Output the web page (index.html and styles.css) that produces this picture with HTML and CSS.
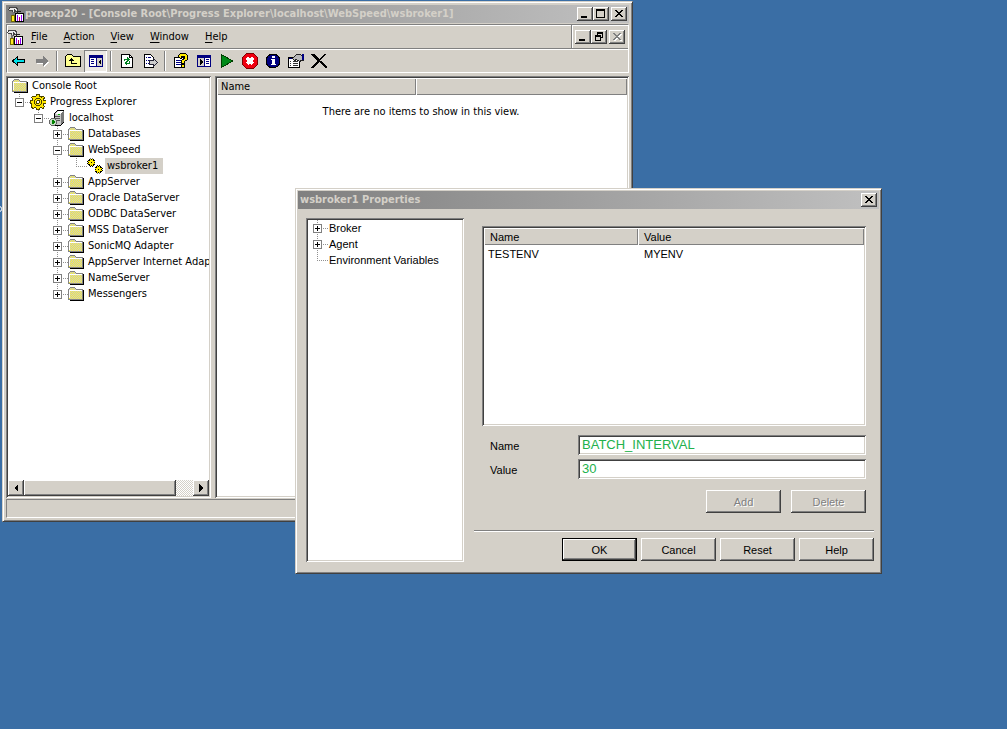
FILE: index.html
```html
<!DOCTYPE html>
<html lang="en">
<head>
<meta charset="utf-8">
<title>proexp20</title>
<link rel="stylesheet" href="styles.css">
</head>
<body>
<svg class="defs" aria-hidden="true">
  <defs>
    <pattern id="dither" width="2" height="2" patternUnits="userSpaceOnUse">
      <rect width="2" height="2" fill="#f8f03c"/><rect width="1" height="1" fill="#c8c8c8"/><rect x="1" y="1" width="1" height="1" fill="#c8c8c8"/>
    </pattern>
    <symbol id="folder" viewBox="0 0 16 16">
      <path d="M2 14h13V4h1v11H2z" fill="#000"/>
      <path d="M.5 13.500v-10l2-2h4l2 2h6v10z" fill="url(#dither)" stroke="#848484"/>
      <path d="M1.500 12V4.500H14" fill="none" stroke="#fff"/>
    </symbol>
    <symbol id="gear" viewBox="0 0 16 16">
      <path d="M6.500.5h3l.5 2 1.500.5 1.500-1 1.500 1.500-1 2 .5 1 2 .5v2l-2 .5-.5 1.500 1 1.500-1.500 2-2-1-1 .5-.5 1.500h-3l-.5-1.500-1.500-.5-1.500 1-2-1.500 1-2-.5-1.500-1.500-.5v-2l2-.5.5-1.500-1-1.500 1.500-1.500 2 1 1-.5z" fill="#ffe600" stroke="#4a4200"/>
      <circle cx="8" cy="8" r="3.500" fill="none" stroke="#4a4200"/>
      <circle cx="8" cy="8" r="1.500" fill="#fff" stroke="#4a4200"/>
    </symbol>
    <symbol id="cog" viewBox="0 0 9 9">
      <path d="M3 0h1v1h1V0h1v1h1v1h1v1h1v1H8v1h1v1H8v1H7v1H6v1H5V8H4v1H3V8H2V7H1V6H0V5h1V4H0V3h1V2h1V1h1z" fill="#000"/>
      <path d="M3 2h3v1h1v3H6v1H3V6H2V3h1z" fill="#ffec00"/><path d="M3 1h1v1H3zM5 1h1v1H5zM1 3h1v1H1zM7 3h1v1H7zM1 5h1v1H1zM7 5h1v1H7zM3 7h1v1H3zM5 7h1v1H5z" fill="#ffec00"/>
      <path d="M4 4h1v1H4z" fill="#000"/>
    </symbol>
    <symbol id="gears" viewBox="0 0 17 16">
      <use href="#cog" x="0" y="0" width="9" height="9"/>
      <use href="#cog" x="8" y="7" width="9" height="9"/>
    </symbol>
    <symbol id="server" viewBox="0 0 16 16">
      <path d="M5.500 3.500l3-3h6v12l-3 3h-6z" fill="#c6c6c6" stroke="#000"/>
      <path d="M6 4h5l3-3H9z" fill="#fff"/><path d="M11.500 4v11l3-3V1z" fill="#777"/>
      <path d="M6 6h5M6 8h5M6 10h5" stroke="#555"/><rect x="9" y="4" width="2" height="1" fill="#0b0"/>
      <circle cx="4" cy="12" r="3.500" fill="#c6ddc6" stroke="#666"/><path d="M3 9.500l4 2.500-4 2.500z" fill="#008000"/>
    </symbol>
    <symbol id="tools" viewBox="0 0 16 16">
      <path d="M.5 3.500l2-2.500h5l2 2v2h-2l-1-1v2h-2V4H1z" fill="#e8e8e8" stroke="#444"/>
      <path d="M4 6h2v4H4z" fill="#777"/><path d="M3.500 9.500h3v6h-3z" fill="#ffec20" stroke="#746800"/>
      <path d="M7.500 7.500h8v8h-8z" fill="#fff" stroke="#000"/><path d="M9.500 9v6M13.500 9v6" stroke="#90f"/><path d="M11.500 11v4" stroke="#c00050"/><path d="M9 7.500V5.500h4" fill="none" stroke="#222"/>
    </symbol>
    <symbol id="min" viewBox="0 0 12 10"><path d="M2 7h6v2H2z"/></symbol>
    <symbol id="max" viewBox="0 0 12 10"><path fill-rule="evenodd" d="M1 0h9v9H1zM2 2v6h7V2z"/></symbol>
    <symbol id="restore" viewBox="0 0 12 10"><path fill-rule="evenodd" d="M4 0h6v6H8v3H2V3h2zM5 2v1h3v2h1V2zM3 5v3h4V5z"/></symbol>
    <symbol id="close" viewBox="0 0 12 10"><path d="M2 1h2v1h1v1h2V2h1V1h2v1H9v1H8v1H7v1h1v1h1v1h1v1H8V7H7V6H5v1H4v1H2V7h1V6h1V5h1V4H4V3H3V2H2z"/></symbol>
  </defs>
</svg>

<main class="desktop">
  <span class="desk-mark"></span>
  <section class="window console" aria-label="proexp20">
    <header class="titlebar">
      <svg class="icon"><use href="#tools"/></svg>
      <h1 class="title">proexp20 - [Console Root\Progress Explorer\localhost\WebSpeed\wsbroker1]</h1>
      <div class="controls">
        <button class="ctl" aria-label="Minimize"><svg><use href="#min"/></svg></button>
        <button class="ctl" aria-label="Maximize"><svg><use href="#max"/></svg></button>
        <button class="ctl ctl-close" aria-label="Close"><svg><use href="#close"/></svg></button>
      </div>
    </header>
    <div class="bars">
      <nav class="menubar">
        <svg class="icon"><use href="#tools"/></svg>
        <button class="menu"><u>F</u>ile</button>
        <button class="menu"><u>A</u>ction</button>
        <button class="menu"><u>V</u>iew</button>
        <button class="menu"><u>W</u>indow</button>
        <button class="menu"><u>H</u>elp</button>
        <div class="controls mdi">
          <button class="ctl" aria-label="Minimize view"><svg><use href="#min"/></svg></button>
          <button class="ctl" aria-label="Restore view"><svg><use href="#restore"/></svg></button>
          <button class="ctl ctl-close" aria-label="Close view" disabled><svg><use href="#close"/></svg></button>
        </div>
      </nav>
      <div class="toolbar">
        <button class="tool" aria-label="Back"><svg viewBox="0 0 16 16"><path d="M1.500 8l5-4.500v3h7v3h-7v3z" fill="#00e0e8" stroke="#000"/></svg></button>
        <button class="tool" aria-label="Forward"><svg viewBox="0 0 16 16"><path d="M3 8h7V5l5 4-5 5v-3H3z" fill="#fff"/><path d="M2 6h7V3l5 5-5 5v-3H2z" fill="#808080"/></svg></button>
        <i class="sep"></i>
        <button class="tool" aria-label="Up one level"><svg viewBox="0 0 16 16"><path d="M.5 13.500v-10l2-2h4l2 2h7v10z" fill="#ffff90" stroke="#000"/><path d="M6.500 5v5.500H12M4 7.500h5M5 6.500h3" stroke="#000" fill="none"/></svg></button>
        <button class="tool pressed" aria-label="Show console tree"><svg viewBox="0 0 16 16"><path d="M1 2h14v12H1z" fill="#000080"/><path d="M2 5h6v8H2z" fill="#fff"/><path d="M9 5h5v8H9z" fill="#d4d0c8"/><path d="M3 6.500h3M3 8.500h3M3 10.500h3" stroke="#000080"/><path d="M13 6v6L10 9z" fill="#000"/></svg></button>
        <i class="sep"></i>
        <button class="tool" aria-label="Refresh"><svg viewBox="0 0 16 16"><path d="M2.500 1.500h8l3 3v10h-11z" fill="#fff" stroke="#000"/><path d="M10.500 1.500v3h3" fill="none" stroke="#000"/><path d="M5 8V6h3V4l3 3-3 2V7H6v1zM11 8v3H8v2l-3-3 3-2v2h2V8z" fill="#008020"/></svg></button>
        <button class="tool" aria-label="Export list"><svg viewBox="0 0 16 16"><path d="M2.500 1.500h6l3 3v10h-9z" fill="#fff" stroke="#000"/><path d="M4 4.500h1M6 4.500h3M4 7.500h1M6 7.500h3M4 10.500h1M6 10.500h3" stroke="#000080"/><path d="M7.500 7.500h4v-2l4 4-4 4v-2h-4z" fill="#ccc" stroke="#223"/></svg></button>
        <i class="sep"></i>
        <button class="tool" aria-label="Help"><svg viewBox="0 0 16 16"><path d="M1.500 4.500h9v10h-9z" fill="#fff" stroke="#000"/><path d="M3 7.500h5M3 9.500h5M3 11.500h6" stroke="#000080"/><path d="M5.500 4.500v-2l2-2h5l2 2v4l-3 2v2h-3v-3l3-2v-2h-3v2z" fill="#ffec00" stroke="#000"/><path d="M8.500 11.500h3v3h-3z" fill="#ffec00" stroke="#000"/></svg></button>
        <button class="tool" aria-label="Show action pane"><svg viewBox="0 0 16 16"><path d="M1 2h14v12H1z" fill="#000080"/><path d="M2 5h6v8H2z" fill="#d4d0c8"/><path d="M9 5h5v8H9z" fill="#fff"/><path d="M10 6.500h3M10 8.500h3M10 10.500h3" stroke="#000080"/><path d="M4 6v6l3-3z" fill="#000"/></svg></button>
        <button class="tool" aria-label="Start"><svg viewBox="0 0 16 16"><path d="M2.500 1.500l11 6.500-11 6.500z" fill="#008a18" stroke="#004000"/></svg></button>
        <button class="tool" aria-label="Stop"><svg viewBox="0 0 16 16"><path d="M4.500.5h7l4 4v7l-4 4h-7l-4-4v-7z" fill="#f00010" stroke="#800000"/><path d="M5 5l6 6M11 5l-6 6" stroke="#fff" stroke-width="3"/></svg></button>
        <button class="tool" aria-label="Status"><svg viewBox="0 0 16 16"><circle cx="8" cy="8" r="7" fill="#000080" stroke="#000"/><path d="M7 3h3v2H7zM6 6h4v5h1v1H6v-1h1V7H6z" fill="#fff"/></svg></button>
        <button class="tool" aria-label="Properties"><svg viewBox="0 0 16 16"><path d="M.5 4.500h11v10H.5z" fill="#fff" stroke="#000"/><path d="M1 5.500h10" stroke="#000080"/><path d="M2 8.500h1M5 8.500h5M2 10.500h1M5 10.500h5M2 12.500h1M5 12.500h5" stroke="#333"/><path d="M4.500 5.500l4-4h4l1 1h2v5h-2l-2 1-3-2-2 1z" fill="#bbb" stroke="#222"/><path d="M14 1h2v6h-2z" fill="#000080"/></svg></button>
        <button class="tool" aria-label="Delete"><svg viewBox="0 0 16 16"><path d="M0 1h3l5 5 6-5h1L9.500 7.500 16 14v1h-2L8 9l-6 6H0l6-7z" fill="#000"/></svg></button>
      </div>
    </div>
    <div class="panes">
      <div class="pane tree-pane">
        <ul class="tree root">
          <li><div class="node root-node"><svg class="icon"><use href="#folder"/></svg><span class="label">Console Root</span></div>
            <ul class="tree">
              <li><div class="node"><button class="toggle" aria-label="Collapse"></button><svg class="icon"><use href="#gear"/></svg><span class="label">Progress Explorer</span></div>
                <ul class="tree sub">
                  <li><div class="node"><button class="toggle" aria-label="Collapse"></button><svg class="icon"><use href="#server"/></svg><span class="label">localhost</span></div>
                    <ul class="tree sub">
                      <li><div class="node"><button class="toggle plus" aria-label="Expand"></button><svg class="icon"><use href="#folder"/></svg><span class="label">Databases</span></div></li>
                      <li><div class="node"><button class="toggle" aria-label="Collapse"></button><svg class="icon"><use href="#folder"/></svg><span class="label">WebSpeed</span></div>
                        <ul class="tree sub"><li><div class="node leaf"><svg class="icon"><use href="#gears"/></svg><span class="label selected">wsbroker1</span></div></li></ul>
                      </li>
                      <li><div class="node"><button class="toggle plus" aria-label="Expand"></button><svg class="icon"><use href="#folder"/></svg><span class="label">AppServer</span></div></li>
                      <li><div class="node"><button class="toggle plus" aria-label="Expand"></button><svg class="icon"><use href="#folder"/></svg><span class="label">Oracle DataServer</span></div></li>
                      <li><div class="node"><button class="toggle plus" aria-label="Expand"></button><svg class="icon"><use href="#folder"/></svg><span class="label">ODBC DataServer</span></div></li>
                      <li><div class="node"><button class="toggle plus" aria-label="Expand"></button><svg class="icon"><use href="#folder"/></svg><span class="label">MSS DataServer</span></div></li>
                      <li><div class="node"><button class="toggle plus" aria-label="Expand"></button><svg class="icon"><use href="#folder"/></svg><span class="label">SonicMQ Adapter</span></div></li>
                      <li><div class="node"><button class="toggle plus" aria-label="Expand"></button><svg class="icon"><use href="#folder"/></svg><span class="label">AppServer Internet Adap</span></div></li>
                      <li><div class="node"><button class="toggle plus" aria-label="Expand"></button><svg class="icon"><use href="#folder"/></svg><span class="label">NameServer</span></div></li>
                      <li><div class="node"><button class="toggle plus" aria-label="Expand"></button><svg class="icon"><use href="#folder"/></svg><span class="label">Messengers</span></div></li>
                    </ul>
                  </li>
                </ul>
              </li>
            </ul>
          </li>
        </ul>
        <div class="scrollbar">
          <button class="arrow" aria-label="Scroll left"><svg viewBox="0 0 8 8"><path d="M6 0v8L2 4z"/></svg></button>
          <div class="thumb"></div><div class="track"></div>
          <button class="arrow" aria-label="Scroll right"><svg viewBox="0 0 8 8"><path d="M2 0v8l4-4z"/></svg></button>
        </div>
      </div>
      <div class="pane list-pane">
        <table class="list items">
          <colgroup><col class="col-item"><col></colgroup>
          <thead><tr><th>Name</th><th></th></tr></thead>
          <tbody><tr><td class="empty" colspan="2">There are no items to show in this view.</td></tr></tbody>
        </table>
      </div>
    </div>
    <div class="status"></div>
  </section>

  <section class="window dialog" role="dialog" aria-label="wsbroker1 Properties">
    <header class="titlebar">
      <h2 class="title">wsbroker1 Properties</h2>
      <div class="controls"><button class="ctl ctl-close" aria-label="Close"><svg><use href="#close"/></svg></button></div>
    </header>
    <div class="dialog-body">
      <div class="pane categories">
        <ul class="tree">
          <li><div class="node"><button class="toggle plus" aria-label="Expand"></button><span class="label">Broker</span></div></li>
          <li><div class="node"><button class="toggle plus" aria-label="Expand"></button><span class="label">Agent</span></div></li>
          <li><div class="node leaf"><span class="label">Environment Variables</span></div></li>
        </ul>
      </div>
      <form class="editor">
        <div class="settings">
          <div class="pane variables">
            <table class="list">
              <colgroup><col class="col-name"><col></colgroup>
              <thead><tr><th>Name</th><th>Value</th></tr></thead>
              <tbody><tr><td>TESTENV</td><td>MYENV</td></tr></tbody>
            </table>
          </div>
          <div class="field"><label for="var-name">Name</label><input id="var-name" type="text" value="BATCH_INTERVAL"></div>
          <div class="field"><label for="var-value">Value</label><input id="var-value" type="text" value="30"></div>
          <div class="actions edit-actions">
            <button class="btn" type="button" disabled>Add</button>
            <button class="btn" type="button" disabled>Delete</button>
          </div>
        </div>
        <div class="actions dialog-actions">
          <button class="btn default" type="button">OK</button>
          <button class="btn" type="button">Cancel</button>
          <button class="btn" type="button">Reset</button>
          <button class="btn" type="button">Help</button>
        </div>
      </form>
    </div>
  </section>
</main>
</body>
</html>
```
FILE: styles.css
```css
:root {
  --face: #d4d0c8;
  --shade: #808080;
  --dark: #404040;
  --raised: inset -1px -1px var(--dark), inset 1px 1px #fff, inset -2px -2px var(--shade);
}
* { box-sizing: border-box; }
body {
  margin: 0;
  background: #3a6ea5;
  color: #000;
  font: 11px/16px "DejaVu Sans Condensed", "DejaVu Sans", sans-serif;
}
button, input { font: inherit; color: inherit; margin: 0; padding: 0; border: 0; border-radius: 0; }
button { background: none; }
svg { display: block; shape-rendering: crispEdges; }
.defs { position: absolute; width: 0; height: 0; }
.desktop { position: relative; min-height: 100vh; overflow: hidden; }
.desk-mark {
  position: absolute; left: -3px; top: 206px; width: 5px; height: 6px;
  border: 1px solid #fff; border-radius: 3px;
}

.window {
  position: absolute;
  background: var(--face);
  border: 1px solid;
  border-color: var(--face) var(--dark) var(--dark) var(--face);
  box-shadow: inset 1px 1px #fff, inset -1px -1px var(--shade);
}
.console { left: 2px; right: 374px; top: 1px; padding: 3px; }
.dialog {
  left: 295px; right: 125px; top: 188px; padding: 2px;
  font-family: "Liberation Sans", Arial, sans-serif;
}
.titlebar {
  display: flex; align-items: center; gap: 1px; height: 18px; padding: 0 2px;
  background: linear-gradient(to right, #808080, #c0c0c0);
}
.title {
  flex: 1; margin: 0; overflow: hidden; white-space: nowrap;
  color: var(--face); font: bold 11px/16px "DejaVu Sans Condensed", "DejaVu Sans", sans-serif;
}
.icon { flex: none; width: 16px; height: 16px; }
.controls { display: flex; flex: none; }
.ctl {
  display: flex; align-items: center; justify-content: center;
  width: 16px; height: 14px; background: var(--face); box-shadow: var(--raised);
}
.ctl svg { width: 12px; height: 10px; }
.ctl-close { margin-left: 2px; }
.ctl:disabled { color: var(--shade); }
.ctl:disabled svg { fill: var(--shade); filter: drop-shadow(1px 1px #fff); }

.bars { margin-top: 1px; border: 1px solid; border-color: var(--shade) #fff #fff var(--shade); }
.menubar {
  display: flex; align-items: center; height: 24px;
  border-bottom: 1px solid var(--shade); box-shadow: inset 1px 1px #fff;
}
.menu { padding: 1px 8px 0; height: 18px; }
.menu u { text-underline-offset: 2px; }
.mdi {
  align-self: stretch; align-items: center; margin-left: auto; padding: 0 3px;
  border-left: 1px solid var(--shade); box-shadow: inset 1px 0 #fff;
}
.toolbar { display: flex; align-items: center; height: 23px; box-shadow: inset 1px 1px #fff; }
.tool { display: flex; align-items: center; justify-content: center; width: 23px; height: 22px; }
.tool svg { width: 16px; height: 16px; }
.pressed { background: #ece9e4; box-shadow: inset 1px 1px var(--shade), inset -1px -1px #fff; }
.sep { width: 2px; height: 20px; margin: 0 3px; border-left: 1px solid var(--shade); border-right: 1px solid #fff; }

.panes { display: flex; gap: 4px; margin-top: 3px; min-height: 422px; }
.pane {
  background: #fff; overflow: hidden; padding: 2px;
  box-shadow: inset 1px 1px var(--shade), inset -1px -1px #fff, inset 2px 2px var(--dark), inset -2px -2px var(--face);
}
.tree-pane { display: flex; flex: none; flex-direction: column; width: 205px; }
.list-pane { flex: 1; }

.tree { list-style: none; margin: 0; padding: 0; white-space: nowrap; }
.tree.root { padding-left: 2px; }
.tree-pane > .tree { flex: 1; overflow: hidden; }
.tree.sub { margin-left: 19px; }
.tree li { background: repeating-linear-gradient(#909090 0 1px, transparent 1px 2px) 9px 0 / 1px 100% no-repeat; }
.tree li:last-child { background-size: 1px 9px; }
.tree-pane > .tree > li { background: none; }
.node {
  display: flex; align-items: center; height: 16px; padding-left: 5px;
  background: repeating-linear-gradient(to right, #909090 0 1px, transparent 1px 2px) 9px 8px / 11px 1px no-repeat;
}
.node.leaf { padding-left: 19px; }
.node.root-node { padding-left: 1px; background: none; }
.toggle {
  flex: none; width: 9px; height: 9px; margin-right: 5px; border: 1px solid var(--shade);
  background: linear-gradient(#000, #000) 1px 3px / 5px 1px no-repeat, #fff;
}
.toggle.plus {
  background: linear-gradient(#000, #000) 1px 3px / 5px 1px no-repeat, linear-gradient(#000, #000) 3px 1px / 1px 5px no-repeat, #fff;
}
.label { padding: 0 2px; }
.node > .icon { margin: 0 2px 0 1px; }
.selected { padding-right: 5px; background: var(--face); }

.scrollbar { display: flex; height: 16px; flex: none; }
.arrow {
  display: flex; flex: none; align-items: center; justify-content: center;
  width: 16px; background: var(--face); box-shadow: var(--raised);
}
.arrow svg { width: 8px; height: 8px; }
.thumb { flex: 1; background: var(--face); box-shadow: var(--raised); }
.track { width: 17px; background: repeating-conic-gradient(#fff 0 25%, var(--face) 0 50%) 0 0 / 2px 2px; }

.list { width: 100%; border-collapse: separate; border-spacing: 0; table-layout: fixed; }
.list th {
  height: 17px; padding: 0 6px; background: var(--face); text-align: left; font-weight: normal;
  line-height: 16px; box-shadow: inset 1px 1px #fff, inset -1px -1px var(--shade);
}
.list td { padding: 1px 6px; }
.list td:first-child { padding-left: 4px; }
.items th { padding: 0 4px; }
.col-item { width: 199px; }
.col-name { width: 154px; }
.list .empty { padding-top: 9px; text-align: center; }
.status { height: 19px; margin-top: 1px; border: 1px solid; border-color: var(--shade) #fff #fff var(--shade); }

.dialog-body { display: flex; gap: 10px; padding: 9px 5px 9px 8px; }
.categories { flex: none; width: 158px; }
.editor { flex: 1; display: flex; flex-direction: column; }
.settings { padding: 8px 8px 17px; border-bottom: 1px solid var(--shade); box-shadow: 0 1px #fff; }
.variables { height: 200px; margin-bottom: 9px; }
.field { display: flex; align-items: center; margin-bottom: 4px; }
.field label { width: 96px; padding: 2px 8px 0; }
.field input {
  flex: 1; min-width: 0; height: 20px; padding: 0 4px 2px; background: #fff; color: #22b14c; font-size: 13px;
  box-shadow: inset 1px 1px var(--shade), inset -1px -1px #fff, inset 2px 2px var(--dark), inset -2px -2px var(--face);
}
.actions { display: flex; justify-content: flex-end; }
.edit-actions { gap: 10px; margin-top: 11px; }
.dialog-actions { gap: 4px; padding: 7px 0 1px; }
.btn { width: 75px; height: 23px; background: var(--face); box-shadow: var(--raised); }
.btn:disabled { color: var(--shade); text-shadow: 1px 1px #fff; }
.default { border: 1px solid #000; }
```
